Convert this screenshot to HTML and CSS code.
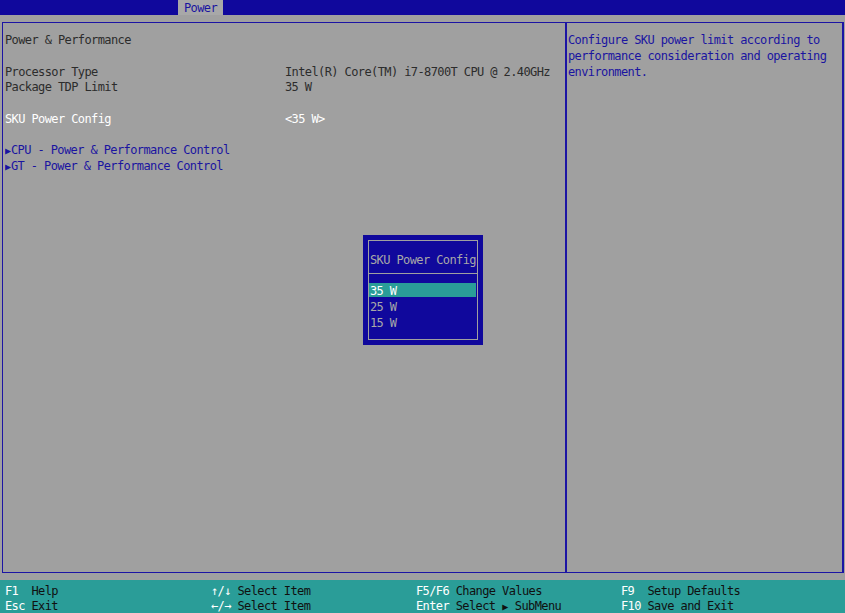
FILE: index.html
```html
<!DOCTYPE html>
<html>
<head>
<meta charset="utf-8">
<link rel="stylesheet" href="styles.css">
</head>
<body>
<div class="screen">
  <div class="topbar"><div class="tab">Power</div></div>
  <div class="main">
    <div class="frame">
      <div class="left">
        <div class="row title">Power &amp; Performance</div>
        <div class="row blank"></div>
        <div class="row"><span class="lbl">Processor Type</span><span class="val">Intel(R) Core(TM) i7-8700T CPU @ 2.40GHz</span></div>
        <div class="row"><span class="lbl">Package TDP Limit</span><span class="val">35 W</span></div>
        <div class="row blank"></div>
        <div class="row sel"><span class="lbl">SKU Power Config</span><span class="val">&lt;35 W&gt;</span></div>
        <div class="row blank"></div>
        <div class="row sub"><span class="tri">&#9654;</span>CPU - Power &amp; Performance Control</div>
        <div class="row sub"><span class="tri">&#9654;</span>GT - Power &amp; Performance Control</div>
      </div>
      <div class="right">
        <div class="help">Configure SKU power limit according to
performance consideration and operating
environment.</div>
      </div>
    </div>
  </div>
  <div class="footer">
    <div class="fcol">
      <div><span class="key">F1  </span><span class="desc">Help</span></div>
      <div><span class="key">Esc </span><span class="desc">Exit</span></div>
    </div>
    <div class="fcol">
      <div><span class="key">&#8593;/&#8595; </span><span class="desc">Select Item</span></div>
      <div><span class="key">&#8592;/&#8594; </span><span class="desc">Select Item</span></div>
    </div>
    <div class="fcol">
      <div><span class="key">F5/F6 </span><span class="desc">Change Values</span></div>
      <div><span class="key">Enter </span><span class="desc">Select <span class="ftri">&#9654;</span> SubMenu</span></div>
    </div>
    <div class="fcol">
      <div><span class="key">F9  </span><span class="desc">Setup Defaults</span></div>
      <div><span class="key">F10 </span><span class="desc">Save and Exit</span></div>
    </div>
  </div>
</div>
<div class="popup">
  <div class="pinner">
    <div class="ptitle">SKU Power Config</div>
    <div class="plist">
      <div class="pitem active">35 W</div>
      <div class="pitem">25 W</div>
      <div class="pitem">15 W</div>
    </div>
  </div>
</div>
</body>
</html>
```

FILE: styles.css
```css
html, body {
  margin: 0;
  padding: 0;
}
body {
  width: 845px;
  height: 613px;
  overflow: hidden;
  background: #a0a0a0;
  font-family: "DejaVu Sans Mono", "Liberation Mono", monospace;
  font-size: 12px;
  letter-spacing: -0.6px;
  color: #2c2c2c;
  position: relative;
}
.screen {
  display: flex;
  flex-direction: column;
  height: 613px;
}
.topbar {
  height: 15px;
  background: #10089c;
  display: flex;
  padding-left: 178px;
}
.tab {
  width: 45px;
  height: 15px;
  background: #a8a8a8;
  color: #1a14a0;
  line-height: 16px;
  text-align: center;
}
.main {
  padding: 7px 1px 0 2px;
  height: 551px;
}
.frame {
  height: 549px;
  border: 1px solid #1c14a4;
  border-right-width: 2px;
  display: flex;
}
.left {
  width: 560px;
  border-right: 2px solid #1c14a4;
  padding: 10px 0 0 2px;
}
.row {
  height: 15.75px;
  line-height: 15.75px;
  white-space: pre;
  display: flex;
}
.lbl {
  width: 280px;
}
.sel {
  color: #ffffff;
}
.sub {
  color: #1a14a0;
}
.tri {
  font-size: 10px;
  letter-spacing: 0;
  width: 6px;
  display: inline-block;
  overflow: hidden;
}
.right {
  flex: 1;
  padding: 9px 0 0 1px;
}
.help {
  white-space: pre;
  line-height: 16px;
  color: #1a14a0;
}
.footer {
  margin-top: 7px;
  height: 33px;
  background: #2a9d98;
  display: grid;
  grid-template-columns: 206px 205px 205px 1fr;
  padding: 4px 0 0 5px;
  box-sizing: border-box;
}
.fcol div {
  height: 15px;
  line-height: 15px;
  white-space: pre;
}
.key {
  color: #ffffff;
}
.desc {
  color: #101010;
}
.ftri {
  font-size: 10px;
  letter-spacing: 0;
}
.popup {
  position: absolute;
  left: 363px;
  top: 235px;
  width: 120px;
  height: 110px;
  background: #10089c;
  padding: 5px;
  box-sizing: border-box;
}
.pinner {
  height: 100%;
  border: 1px solid #a0a0a0;
  box-sizing: border-box;
  display: flex;
  flex-direction: column;
}
.ptitle {
  height: 32px;
  line-height: 38px;
  border-bottom: 1px solid #a0a0a0;
  padding-left: 1px;
  color: #a8a8a8;
  white-space: pre;
}
.plist {
  padding-top: 9px;
}
.pitem {
  height: 16px;
  line-height: 17px;
  color: #a8a8a8;
  padding-left: 1px;
  margin-right: 1px;
}
.pitem.active {
  background: #2a9d98;
  color: #ffffff;
  height: 14px;
  line-height: 16px;
  margin-bottom: 2px;
}
```
